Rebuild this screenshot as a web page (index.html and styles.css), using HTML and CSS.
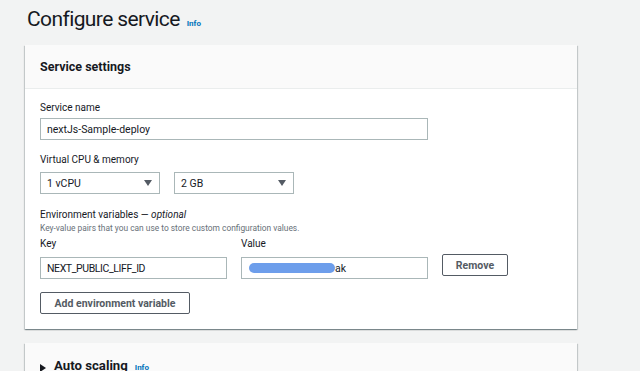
FILE: index.html
```html
<!DOCTYPE html>
<html>
<head>
<meta charset="utf-8">
<link rel="stylesheet" href="styles.css">
</head>
<body>
<div class="page">
  <div class="title-row">
    <h1 class="title">Configure service</h1>
    <span class="info">Info</span>
  </div>

  <div class="card">
    <div class="card-header">Service settings</div>
    <div class="card-body">
      <div class="label l-name">Service name</div>
      <div class="input wide">nextJs-Sample-deploy</div>

      <div class="label l-cpu">Virtual CPU &amp; memory</div>
      <div class="select-row">
        <div class="select"><span>1 vCPU</span><span class="arrow"></span></div>
        <div class="select"><span>2 GB</span><span class="arrow"></span></div>
      </div>

      <div class="label l-env">Environment variables — <i>optional</i></div>
      <div class="desc">Key-value pairs that you can use to store custom configuration values.</div>
      <div class="kv">
        <div class="kv-col">
          <div class="label">Key</div>
          <div class="input half caps">NEXT_PUBLIC_LIFF_ID</div>
        </div>
        <div class="kv-col">
          <div class="label">Value</div>
          <div class="input half value"><span class="redact"></span><span>ak</span></div>
        </div>
        <div class="kv-btn">
          <button class="btn remove">Remove</button>
        </div>
      </div>
      <button class="btn add">Add environment variable</button>
    </div>
  </div>

  <div class="card card2">
    <div class="card2-header">
      <span class="caret"></span>
      <span class="h2">Auto scaling</span>
      <span class="info">Info</span>
    </div>
  </div>
</div>
</body>
</html>
```

FILE: styles.css
```css
* { box-sizing: border-box; }
body {
  margin: 0;
  background: #f2f3f3;
  font-family: Roboto, "Liberation Sans", Arial, sans-serif;
  color: #16191f;
  overflow: hidden;
}
.page {
  padding-left: 25px;
  width: 577px;
}
.title-row {
  display: flex;
  align-items: baseline;
  height: 45px;
  padding-left: 2px;
  padding-top: 4px;
}
.title {
  margin: 0;
  font-size: 21px;
  font-weight: 400;
  line-height: 30px;
  letter-spacing: -0.6px;
}
.info {
  color: #0073bb;
  font-size: 8px;
  font-weight: 700;
  margin-left: 7px;
}
.card {
  background: #fff;
  box-shadow: 0 1px 1px 0 rgba(0,28,36,.3), 1px 1px 1px 0 rgba(0,28,36,.15), -1px 1px 1px 0 rgba(0,28,36,.15);
}
.card-header {
  height: 44px;
  background: #fafafa;
  border-bottom: 1px solid #eaeded;
  padding-left: 15px;
  font-size: 12.5px;
  font-weight: 700;
  display: flex;
  align-items: center;
}
.card-body {
  padding: 12px 15px 15px 15px;
}
.label {
  font-size: 10px;
  line-height: 14px;
  height: 14px;
}
.l-cpu { margin-top: 13px; }
.l-env { margin-top: 14px; }
.input {
  height: 22px;
  border: 1px solid #aab7b8;
  font-size: 10.5px;
  display: flex;
  align-items: center;
  padding-left: 6px;
  margin-top: 3px;
}
.caps { letter-spacing: -0.4px; }
.wide { width: 388px; }
.select-row {
  display: flex;
  gap: 14px;
  margin-top: 5px;
}
.select {
  width: 120px;
  height: 22px;
  border: 1px solid #aab7b8;
  font-size: 10.5px;
  display: flex;
  align-items: center;
  justify-content: space-between;
  padding: 0 7px 0 6px;
}
.arrow {
  width: 0;
  height: 0;
  border-left: 4px solid transparent;
  border-right: 4px solid transparent;
  border-top: 6px solid #545b64;
}
.desc {
  font-size: 8.4px;
  color: #687078;
  line-height: 12px;
  height: 12px;
}
.kv {
  display: flex;
  gap: 14px;
  margin-top: 3px;
}
.kv .input { margin-top: 6px; }
.half { width: 187px; }
.value { padding-left: 7px; }
.redact {
  display: inline-block;
  width: 86px;
  height: 10px;
  border-radius: 5px;
  background: #6d9eeb;
}
.kv-btn {
  padding-top: 17px;
}
.btn {
  font-family: inherit;
  background: #fff;
  border: 1px solid #545b64;
  border-radius: 2px;
  color: #545b64;
  font-weight: 700;
  font-size: 10.5px;
  height: 22px;
  padding: 0;
  display: block;
}
.remove { width: 66px; }
.add {
  width: 150px;
  margin-top: 13px;
}
.card2 {
  margin-top: 14px;
  height: 40px;
  background: #fafafa;
}
.card2-header {
  display: flex;
  align-items: baseline;
  padding-left: 15px;
  padding-top: 15px;
}
.caret {
  width: 0;
  height: 0;
  border-top: 4px solid transparent;
  border-bottom: 4px solid transparent;
  border-left: 6px solid #16191f;
  margin-right: 8px;
  align-self: center;
  margin-top: 4px;
}
.h2 {
  font-size: 13.2px;
  font-weight: 700;
}
```
